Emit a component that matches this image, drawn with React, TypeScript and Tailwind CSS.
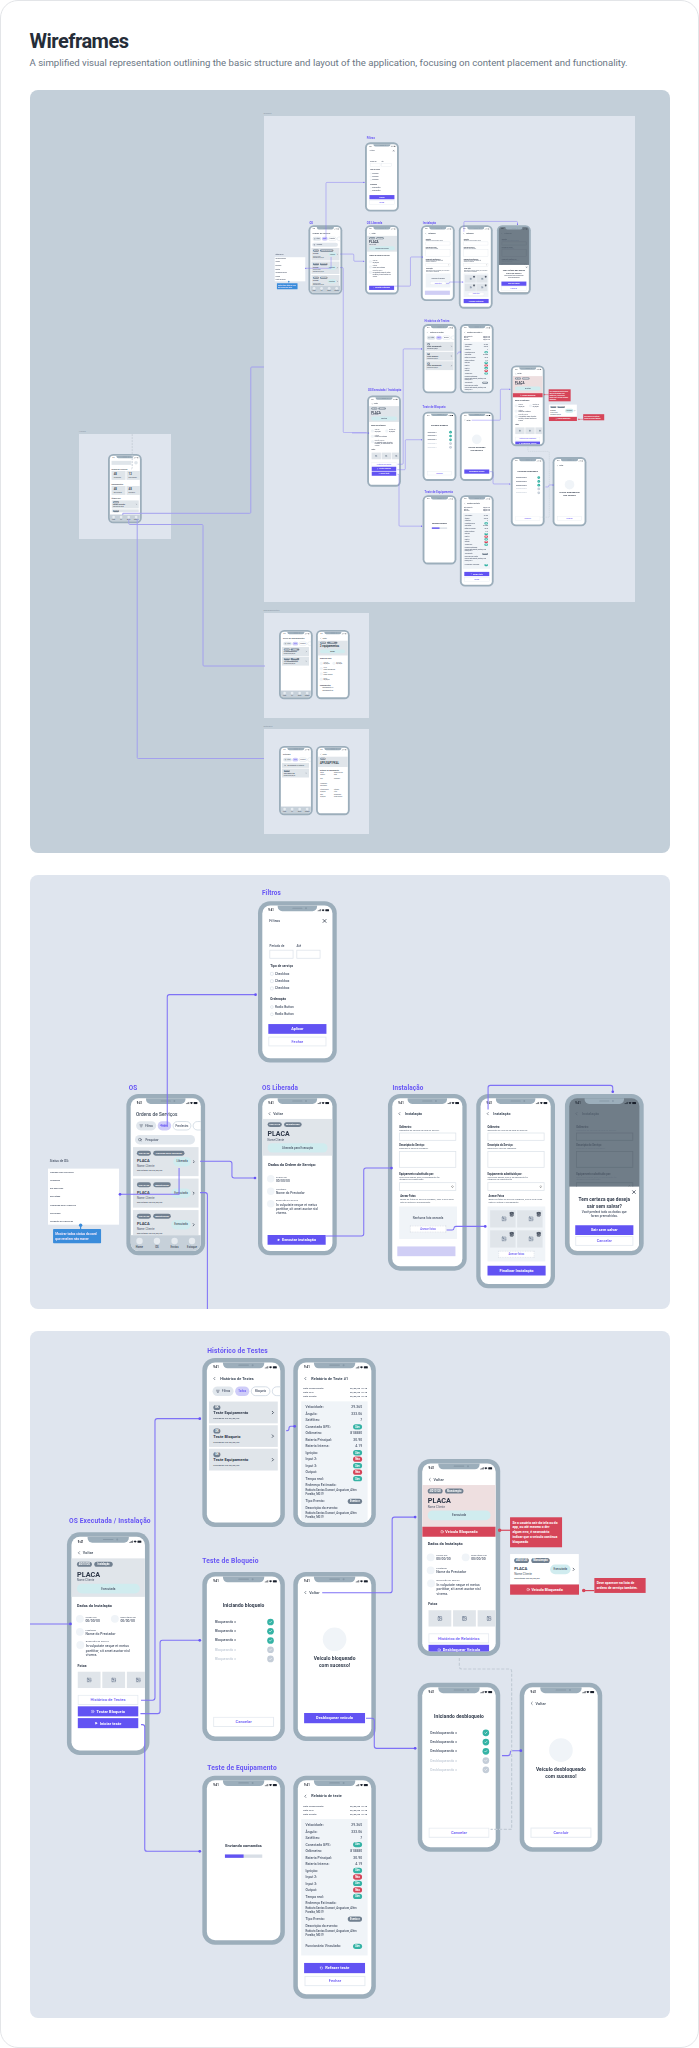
import React from 'react';
import {
  AlertCircle, Check, ChevronLeft, ChevronRight, ChevronsUpDown, Image as ImageIcon,
  ListFilter, Play, RotateCcw, Search, Trash2, X,
} from 'lucide-react';
import clsx from 'clsx';

type ChildrenProps = { className?: string; children?: React.ReactNode };

/* ---------- phone ---------- */

const StatusBar: React.FC = () => (
  <div className="flex h-[44px] shrink-0 items-center justify-between pl-[32px] pr-[16px] pt-[6px] text-[#1a202c]">
    <span className="text-[14px] font-bold leading-none">9:41</span>
    <svg className="h-[14px] w-[64px]" viewBox="0 0 64 14" fill="currentColor">
      <rect x="0" y="9" width="3" height="4" />
      <rect x="5" y="7" width="3" height="6" />
      <rect x="10" y="4" width="3" height="9" />
      <rect x="15" y="1" width="3" height="12" />
      <path d="M22 5 Q30 -2 38 5 L30 13 Z" />
      <rect x="42" y="1" width="20" height="12" rx="3" />
    </svg>
  </div>
);

const Phone: React.FC<ChildrenProps & { dark?: boolean }> = ({ className, children, dark }) => (
  <div className={clsx('absolute flex w-[420px] rounded-[64px] bg-[#9caebb] p-[23px] tracking-[0.3px]', className)}>
    <div className={clsx('relative flex w-full flex-col overflow-hidden rounded-[42px]', dark ? 'bg-[#707d88]' : 'bg-white')}>
      <div className="absolute left-[82px] top-[-2px] flex h-[32px] w-[210px] items-center justify-center gap-[14px] rounded-b-[24px] bg-[#9caebb]">
        <div className="ml-[24px] h-[6px] w-[54px] rounded-full bg-[#8799a8]" />
        <div className="h-[10px] w-[10px] rounded-full bg-[#8799a8]" />
      </div>
      <StatusBar />
      {children}
    </div>
  </div>
);

const Label: React.FC<ChildrenProps> = ({ className, children }) => (
  <div className={clsx('absolute whitespace-nowrap text-[34px] font-bold leading-[40px] tracking-[0.7px] text-[#6654f5]', className)}>
    {children}
  </div>
);

/* ---------- small parts ---------- */

const Button: React.FC<ChildrenProps> = ({ className, children }) => (
  <div className={clsx('flex h-[52px] w-[310px] shrink-0 items-center justify-center gap-[10px] bg-[#6253f3] text-[20px] font-bold text-white', className)}>
    {children}
  </div>
);

const OutlineButton: React.FC<ChildrenProps> = ({ className, children }) => (
  <div className={clsx('flex h-[52px] w-[310px] shrink-0 items-center justify-center border-[5px] border-[#e6ebf1] bg-white text-[20px] font-medium text-[#6654f5]', className)}>
    {children}
  </div>
);

const Badge: React.FC<ChildrenProps> = ({ className, children }) => (
  <div className={clsx('flex h-[26px] items-center justify-center whitespace-nowrap rounded-full bg-[#718090] text-[13px] font-bold tracking-normal text-white', className)}>
    {children}
  </div>
);

const Back: React.FC<{ text?: string; title?: string }> = ({ text, title }) => (
  <div className="flex h-[66px] shrink-0 items-center pl-[26px] pt-[10px] text-[#3c4858]">
    <ChevronLeft size={24} strokeWidth={3} />
    {text && <span className="ml-[8px] text-[19px] font-medium">{text}</span>}
    {title && <span className="ml-[18px] text-[19px] font-bold">{title}</span>}
  </div>
);

const Chips: React.FC<{ last: string }> = ({ last }) => (
  <div className="ml-[29px] flex h-[49px] w-[400px] shrink-0 gap-[8px] text-[14px] font-medium text-[#4a5568]">
    <div className="flex w-[118px] items-center justify-center gap-[12px] rounded-full bg-[#e1e7ed]">
      <ListFilter size={20} strokeWidth={3} />
      Filtros
    </div>
    <div className="flex w-[80px] items-center justify-center rounded-full bg-[#cfcdf8] text-[#6654f5]">Todos</div>
    <div className="flex w-[108px] items-center justify-center rounded-full border-[4px] border-[#cbd5e0]">{last}</div>
    <div className="w-[108px] rounded-full border-[4px] border-[#cbd5e0]" />
  </div>
);

const TabBar: React.FC = () => (
  <div className="mt-auto flex h-[84px] shrink-0 bg-[#c6d0d9] pt-[14px]">
    {['Home', 'OS', 'Envios', 'Estoque'].map(tab => (
      <div key={tab} className="flex flex-1 flex-col items-center gap-[6px] text-[14px] font-medium leading-none text-[#3c4858]">
        <div className="h-[34px] w-[34px] rounded-full bg-[#e6ebf0]" />
        {tab}
      </div>
    ))}
  </div>
);

const OrderCard: React.FC<{ tag: string; wide?: boolean; status: string; white?: boolean }> = ({ tag, wide, status, white }) => (
  <div className={clsx('flex h-[155px] w-[350px] shrink-0 items-center pl-[21px] pr-[14px] text-[#4a5568]', white ? 'bg-white' : 'bg-[#e0e5ea]')}>
    <div className="flex flex-1 flex-col">
      <div className="flex gap-[12px]">
        <Badge className="w-[75px]">#ID10120</Badge>
        <Badge className={wide ? 'w-[167px]' : 'w-[94px]'}>{tag}</Badge>
      </div>
      <span className="mt-[14px] text-[21px] font-bold leading-[26px] text-[#2d3748]">PLACA</span>
      <span className="mt-[6px] text-[15px] leading-[22px]">Nome Cliente</span>
      <span className="text-[12px] font-medium leading-[22px]">Executada em 00/00/00</span>
    </div>
    <div className="-ml-[60px] flex h-[50px] w-[104px] items-center justify-center rounded-full bg-[#d0ecef] text-[15px] font-medium">{status}</div>
    <ChevronRight className="ml-[4px] text-[#2d3748]" size={24} strokeWidth={3.5} />
  </div>
);

const Info: React.FC<{ label: string; value: string; className?: string }> = ({ label, value, className }) => (
  <div className={clsx('flex h-[66px] items-center gap-[8px] text-[#4a5568]', className)}>
    <div className="h-[40px] w-[40px] shrink-0 rounded-full bg-[#f0f4f8]" />
    <div className="flex flex-col whitespace-nowrap">
      <span className="text-[12px] leading-[18px]">{label}</span>
      <span className="text-[17px] font-medium leading-[20px]">{value}</span>
    </div>
  </div>
);

const ServiceDescription: React.FC = () => (
  <div className="ml-[25px] mt-[6px] flex h-[96px] shrink-0 gap-[8px] text-[#4a5568]">
    <div className="mt-[8px] h-[40px] w-[40px] shrink-0 rounded-full bg-[#f0f4f8]" />
    <div className="w-[250px]">
      <p className="text-[12px] leading-[22px]">Descrição do serviço</p>
      <p className="whitespace-nowrap text-[17px] font-medium leading-[23px]">
        In vulputate neque et metus<br />porttitor, sit amet auctor nisl<br />viverra.
      </p>
    </div>
  </div>
);

const PlateHeader: React.FC<{ tag: string; status: string; blocked?: boolean }> = ({ tag, status, blocked }) => (
  <div className={clsx('flex shrink-0 flex-col pl-[28px] pt-[17px]', blocked ? 'h-[212px] bg-[#eedfe0]' : 'h-[196px] bg-[#e0e5ea]')}>
    <div className="flex gap-[12px]">
      <Badge className="w-[76px]">#ID10120</Badge>
      <Badge className="w-[94px]">{tag}</Badge>
    </div>
    <span className="mt-[18px] text-[37px] font-bold leading-[40px] tracking-normal text-[#2d3748]">PLACA</span>
    <span className="mt-[1px] text-[14px] leading-[16px] text-[#4a5568]">Nome Cliente</span>
    <div className="mt-[11px] flex h-[50px] w-[320px] shrink-0 items-center justify-center rounded-full bg-[#d0ecef] text-[15px] font-medium text-[#4a5568]">{status}</div>
  </div>
);

const Photo: React.FC<ChildrenProps> = ({ className }) => (
  <div className={clsx('flex shrink-0 items-center justify-center bg-[#e0e5ea] text-[#718096]', className)}>
    <ImageIcon size={26} strokeWidth={3} />
  </div>
);

/* ---------- screens ---------- */

const FiltersScreen: React.FC<ChildrenProps> = ({ className }) => (
  <Phone className={className}>
    <div className="flex h-[76px] shrink-0 items-center justify-between pl-[37px] pr-[26px] text-[20px] font-medium text-[#4a5568]">
      Filtros
      <X size={32} strokeWidth={3} className="text-[#2d3748]" />
    </div>
    <div className="ml-[38px] mt-[85px] flex gap-[16px] text-[16px] font-medium leading-[24px] text-[#4a5568]">
      {['Período de', 'Até'].map(label => (
        <div key={label} className="flex w-[128px] flex-col gap-[7px]">
          {label}
          <div className="h-[47px] border-[4px] border-[#dde3ea]" />
        </div>
      ))}
    </div>
    <div className="ml-[42px] flex flex-col text-[17px] font-medium text-[#4a5568]">
      <h4 className="mb-[12px] mt-[25px] text-[17px] font-bold leading-[24px] text-[#2d3748]">Tipo de serviço</h4>
      {[1, 2, 3].map(i => (
        <div key={i} className="flex h-[39px] items-center gap-[7px]">
          <div className="h-[18px] w-[18px] rounded-[4px] border-[3px] border-[#d5dde6]" />Checkbox
        </div>
      ))}
      <h4 className="mb-[12px] mt-[24px] text-[17px] font-bold leading-[24px] text-[#2d3748]">Ordenação</h4>
      {[1, 2].map(i => (
        <div key={i} className="flex h-[39px] items-center gap-[7px]">
          <div className="h-[18px] w-[18px] rounded-full border-[3px] border-[#d5dde6]" />Radio Button
        </div>
      ))}
    </div>
    <Button className="ml-[32px] mt-[33px]">Aplicar</Button>
    <OutlineButton className="ml-[32px] mt-[15px]">Fechar</OutlineButton>
  </Phone>
);

const OrdersScreen: React.FC<ChildrenProps> = ({ className }) => (
  <Phone className={className}>
    <h3 className="mb-[22px] ml-[28px] mt-[26px] text-[25px] font-medium leading-[30px] text-[#3c4858]">Ordens de Serviços</h3>
    <Chips last="Pendentes" />
    <div className="ml-[23px] mt-[24px] flex h-[51px] w-[320px] shrink-0 items-center gap-[18px] rounded-full bg-[#e1e7ed] pl-[16px] text-[15px] font-medium text-[#4a5568]">
      <Search size={22} strokeWidth={3} />
      Pesquisar
    </div>
    <div className="ml-[12px] mt-[14px] flex h-[469px] flex-col gap-[13px] overflow-hidden">
      <OrderCard tag="Liberada para execução" wide status="Liberada" />
      <OrderCard tag="Manutenção" status="Executada" />
      <OrderCard tag="Manutenção" status="Executada" />
    </div>
    <TabBar />
  </Phone>
);

const ReleasedScreen: React.FC<ChildrenProps> = ({ className }) => (
  <Phone className={className}>
    <Back text="Voltar" />
    <PlateHeader tag="Manutenção" status="Liberada para Execução" />
    <h4 className="mb-[26px] ml-[32px] mt-[36px] text-[20px] font-bold leading-[28px] tracking-normal text-[#2d3748]">Dados da Ordem de Serviço:</h4>
    <Info className="ml-[25px]" label="Criado em" value="00/00/00" />
    <Info className="ml-[25px]" label="Prestador" value="Nome do Prestador" />
    <ServiceDescription />
    <Button className="ml-[28px] mt-[99px]"><Play size={16} fill="currentColor" />Executar instalação</Button>
  </Phone>
);

const Field: React.FC<ChildrenProps & { title: string; hint: React.ReactNode }> = ({ title, hint, className, children }) => (
  <div className={clsx('flex flex-col', className)}>
    <span className="text-[14px] font-bold leading-[16px] tracking-normal text-[#2d3748]">{title}</span>
    <span className="whitespace-nowrap text-[12px] leading-[15px] tracking-normal text-[#5a6778]">{hint}</span>
    {children}
  </div>
);

const InstallForm: React.FC<{ muted?: boolean }> = ({ muted }) => (
  <div className={clsx('ml-[37px] flex w-[304px] flex-col', muted && 'opacity-50')}>
    <Field title="Odômetro:" hint="Odômetro do veículo na hora do serviço." className="mt-[37px]">
      <div className="mt-[5px] h-[43px] border-[4px] border-[#dde3ea]" />
    </Field>
    <Field title="Descrição do Serviço:" hint="Descreva o serviço realizado." className="mt-[17px]">
      <div className="mt-[7px] h-[89px] border-[4px] border-[#dde3ea]" />
    </Field>
    <Field title="Equipamento substituído por:" hint={<>Selecione abaixo qual o equipamento foi<br />utilizado na substituição</>} className="mt-[26px]">
      <div className="mt-[6px] flex h-[46px] items-center justify-end border-[4px] border-[#dde3ea] pr-[8px]">
        <ChevronsUpDown size={16} strokeWidth={3} />
      </div>
    </Field>
    <Field
      title="Anexar Fotos"
      hint={<>Anexe as fotos do serviço realizado, com o local onde<br />está ou estava o equipamento</>}
      className="ml-[5px] mt-[20px]"
    />
  </div>
);

const InstallScreen: React.FC<ChildrenProps & { photos?: boolean }> = ({ className, photos }) => (
  <Phone className={className}>
    <Back title="Instalação" />
    <InstallForm />
    {photos ? (
      <div className="ml-[37px] mt-[17px] flex h-[293px] w-[308px] shrink-0 flex-col items-center bg-[#f0f4f8] pt-[20px]">
        <div className="grid grid-cols-2 gap-x-[8px] gap-y-[15px]">
          {[1, 2, 3, 4].map(i => (
            <div key={i} className="flex h-[92px] w-[136px] justify-end bg-[#e0e5ea] pr-[8px] pt-[8px] text-[#718096]">
              <ImageIcon size={28} strokeWidth={3} className="mr-[14px] mt-[24px]" />
              <Trash2 size={26} strokeWidth={4} className="text-[#2d3748]" />
            </div>
          ))}
        </div>
        <div className="mt-[18px] flex h-[36px] w-[192px] items-center justify-center border-[3px] border-dashed border-[#cfd6e0] bg-white text-[14px] font-medium text-[#6654f5]">Anexar fotos</div>
      </div>
    ) : (
      <div className="ml-[37px] mt-[17px] flex h-[173px] w-[308px] shrink-0 flex-col items-center bg-[#f0f4f8] pt-[50px] text-[15px] font-medium leading-[22px] text-[#4a5568]">
        Nenhuma foto anexada
        <div className="mt-[30px] flex h-[36px] w-[192px] items-center justify-center border-[3px] border-dashed border-[#cfd6e0] bg-white text-[14px] text-[#6654f5]">Anexar fotos</div>
      </div>
    )}
    {photos
      ? <Button className="ml-[37px] mt-[23px]">Finalizar Instalação</Button>
      : <div className="ml-[27px] mt-[40px] h-[52px] w-[310px] bg-[#d0cef5]" />}
  </Phone>
);

const ExitModalScreen: React.FC<ChildrenProps> = ({ className }) => (
  <Phone className={className} dark>
    <div className="flex h-[427px] flex-col overflow-hidden">
      <div className="opacity-50"><Back title="Instalação" /></div>
      <div className="[&_div]:border-[#56636f]"><InstallForm muted /></div>
    </div>
    <div className="flex flex-1 flex-col items-center bg-white text-center text-[#2d3748]">
      <X size={30} strokeWidth={3} className="mr-[14px] mt-[14px] self-end" />
      <p className="mt-[4px] text-[25px] font-bold leading-[37px]">Tem certeza que deseja<br />sair sem salvar?</p>
      <p className="mt-[2px] text-[16px] font-medium leading-[22px] text-[#4a5568]">Você perderá todo os dados que<br />foram preenchidos.</p>
      <Button className="mt-[38px]">Sair sem salvar</Button>
      <OutlineButton className="mt-[6px]">Cancelar</OutlineButton>
    </div>
  </Phone>
);

const ExecutedScreen: React.FC<ChildrenProps & { blocked?: boolean }> = ({ className, blocked }) => (
  <Phone className={className}>
    <Back text="Voltar" />
    <PlateHeader tag={blocked ? 'Manutenção' : 'Instalação'} status="Executada" blocked={blocked} />
    {blocked && (
      <div className="flex h-[51px] shrink-0 items-center justify-center gap-[8px] bg-[#d64559] text-[19px] font-bold text-white">
        <AlertCircle size={18} strokeWidth={3} />Veículo Bloqueado
      </div>
    )}
    <h4 className={clsx('mb-[20px] ml-[28px] text-[19px] font-bold leading-[28px] text-[#2d3748]', blocked ? 'mt-[24px]' : 'mt-[31px]')}>Dados da Instalação</h4>
    <div className="flex shrink-0">
      <Info className="ml-[23px] w-[178px]" label="Criado em" value="00/00/00" />
      <Info label="Executado em" value="00/00/00" />
    </div>
    <Info className="ml-[23px] shrink-0" label="Prestador" value="Nome do Prestador" />
    <ServiceDescription />
    <h4 className="ml-[31px] mt-[24px] text-[18px] font-bold leading-[24px] text-[#2d3748]">Fotos</h4>
    <div className="ml-[32px] mt-[20px] flex w-[400px] shrink-0 gap-[9px]">
      <Photo className="h-[83px] w-[116px]" />
      <Photo className="h-[83px] w-[116px]" />
      <Photo className="h-[83px] w-[116px]" />
    </div>
    <OutlineButton className="ml-[31px] mt-[34px]">{blocked ? 'Histórico de Relatórios' : 'Histórico de Testes'}</OutlineButton>
    <Button className="ml-[31px] mt-[7px]"><AlertCircle size={18} strokeWidth={3} />{blocked ? 'Desbloquear Veículo' : 'Testar Bloqueio'}</Button>
    {!blocked && <Button className="ml-[31px] mt-[8px]"><Play size={16} fill="currentColor" />Iniciar teste</Button>}
  </Phone>
);

const HistoryScreen: React.FC<ChildrenProps> = ({ className }) => (
  <Phone className={className}>
    <Back title="Histórico de Testes" />
    <div className="h-[12px] shrink-0" />
    <Chips last="Bloqueio" />
    <div className="ml-[11px] mt-[28px] flex w-[350px] flex-col gap-[9px]">
      {['Teste Equipamento', 'Teste Bloqueio', 'Teste Equipamento'].map((title, i) => (
        <div key={i} className="flex h-[111px] items-center justify-between bg-[#e0e5ea] pl-[22px] pr-[12px] text-[#2d3748]">
          <div className="flex flex-col">
            <Badge className="w-[36px]">OK</Badge>
            <span className="mt-[2px] text-[20px] font-bold leading-[26px]">{title}</span>
            <span className="mt-[4px] text-[12px] font-medium leading-[20px] text-[#4a5568]">Realizado em 00/00/00</span>
          </div>
          <ChevronRight size={26} strokeWidth={3.5} />
        </div>
      ))}
    </div>
  </Phone>
);

const readings: { name: string; value: string; kind?: 'on' | 'off' }[] = [
  { name: 'Velocidade:', value: '29.365' },
  { name: 'Ângulo:', value: '333.06' },
  { name: 'Satélites:', value: '7' },
  { name: 'Conectado GPS:', value: 'Sim', kind: 'on' },
  { name: 'Odômetro:', value: '818880' },
  { name: 'Bateria Principal:', value: '30.90' },
  { name: 'Bateria Interna:', value: '4.19' },
  { name: 'Ignição:', value: 'Sim', kind: 'on' },
  { name: 'Input 2:', value: 'Não', kind: 'off' },
  { name: 'Input 3:', value: 'Sim', kind: 'on' },
  { name: 'Output:', value: 'Não', kind: 'off' },
  { name: 'Tempo real:', value: 'Sim', kind: 'on' },
];

const Pill: React.FC<{ kind: 'on' | 'off'; children: React.ReactNode }> = ({ kind, children }) => (
  <span className={clsx('flex h-[27px] w-[46px] items-center justify-center rounded-full text-[13px] font-bold text-white', kind === 'on' ? 'bg-[#35b3a5]' : 'bg-[#d64559]')}>
    {children}
  </span>
);

const ReportScreen: React.FC<ChildrenProps & { title: string; full?: boolean }> = ({ className, title, full }) => (
  <Phone className={className}>
    <Back title={title} />
    <div className="ml-[27px] mt-[12px] flex w-[326px] shrink-0 flex-col text-[12px] font-medium leading-[20px] text-[#4a5568]">
      {['Data Recebimento:', 'Data GPS:', 'Data evento:'].map(label => (
        <div key={label} className="flex justify-between"><span>{label}</span><span>00/00/00 10:48</span></div>
      ))}
    </div>
    <div className={clsx('ml-[17px] mt-[16px] flex w-[338px] shrink-0 flex-col bg-[#f0f4f8] pl-[22px] pr-[28px] pt-[14px] text-[17px] font-medium text-[#4a5568]', full ? 'h-[694px]' : 'h-[640px]')}>
      {readings.map(({ name, value, kind }) => (
        <div key={name} className="flex h-[33px] shrink-0 items-center justify-between">
          {name}
          {kind ? <Pill kind={kind}>{value}</Pill> : <span>{value}</span>}
        </div>
      ))}
      <span className="leading-[32px]">Endereço Estimado:</span>
      <span className="whitespace-nowrap text-[14px] leading-[21px] tracking-normal">Rodovia Santos Dumont, Angustura, Além<br />Paraíba, MG19</span>
      <div className="mt-[9px] flex h-[32px] items-center justify-between">
        Tipo Evento:
        <Badge className="w-[73px]">Evento n</Badge>
      </div>
      <span className="leading-[32px]">Descrição do evento:</span>
      <span className="whitespace-nowrap text-[14px] leading-[21px] tracking-normal">Rodovia Santos Dumont, Angustura, Além<br />Paraíba, MG19</span>
      {full && (
        <div className="mt-[32px] flex h-[32px] items-center justify-between">
          Funcionário Vinculado:
          <Pill kind="on">Sim</Pill>
        </div>
      )}
    </div>
    {full && (
      <>
        <Button className="ml-[32px] mt-[38px]"><RotateCcw size={18} strokeWidth={3} />Refazer teste</Button>
        <OutlineButton className="ml-[34px] mt-[14px]">Fechar</OutlineButton>
      </>
    )}
  </Phone>
);

const ProgressScreen: React.FC<ChildrenProps & { title: string; step: string }> = ({ className, title, step }) => (
  <Phone className={className}>
    <h3 className="mt-[89px] text-center text-[25px] font-bold leading-[30px] text-[#2d3748]">{title}</h3>
    <div className="ml-[41px] mt-[52px] flex w-[300px] flex-col gap-[13px]">
      {[true, true, true, false, false].map((done, i) => (
        <div key={i} className={clsx('flex h-[34px] items-center justify-between text-[17px] font-medium', done ? 'text-[#4a5568]' : 'text-[#c4cdd8]')}>
          {step}
          <div className={clsx('flex h-[34px] w-[34px] items-center justify-center rounded-full text-white', done ? 'bg-[#35b3a5]' : 'bg-[#c4cdd8]')}>
            <Check size={18} strokeWidth={4} />
          </div>
        </div>
      ))}
    </div>
    <OutlineButton className="mb-[48px] ml-[32px] mt-auto">Cancelar</OutlineButton>
  </Phone>
);

const SuccessScreen: React.FC<ChildrenProps & { text: string }> = ({ className, text, children }) => (
  <Phone className={className}>
    <Back text="Voltar" />
    <div className="mt-[150px] h-[120px] w-[120px] shrink-0 self-center rounded-full bg-[#f0f4f8]" />
    <p className="mt-[18px] text-center text-[25px] font-bold leading-[37px] text-[#2d3748]">{text}<br />com sucesso!</p>
    {children}
  </Phone>
);

const SendingScreen: React.FC<ChildrenProps> = ({ className }) => (
  <Phone className={className}>
    <div className="mt-[276px] flex flex-col items-center gap-[30px] text-[20px] font-bold leading-[28px] text-[#2d3748]">
      Enviando comandos
      <div className="flex h-[17px] w-[190px] bg-[#d8dee6]"><div className="w-1/2 bg-[#6253f3]" /></div>
    </div>
  </Phone>
);

const summaries = [
  { title: 'Ordens de Serviços', tiles: [['48', 'Pendentes'], ['12', 'Executadas']] },
  { title: 'Equipamentos', tiles: [['48', 'Em estoque'], ['48', 'Enviados']] },
];

const HomeScreen: React.FC<ChildrenProps> = ({ className }) => (
  <Phone className={className}>
    <div className="ml-[21px] mt-[18px] flex shrink-0 items-center gap-[36px]">
      <div className="h-[50px] w-[246px] bg-[#dfe5ea]" />
      <div className="h-[44px] w-[44px] rounded-full bg-[#dfe5ea]" />
    </div>
    {summaries.map(({ title, tiles }) => (
      <div key={title} className="ml-[21px] mt-[36px] flex w-[380px] shrink-0 flex-col">
        <h4 className="text-[22px] font-bold leading-[36px] text-[#3c4858]">{title}</h4>
        <div className="mt-[4px] flex gap-[12px]">
          {tiles.map(([count, label]) => (
            <div key={label} className="flex h-[111px] w-[174px] flex-col justify-center bg-[#dfe5ea] pl-[26px] text-[#3c4858]">
              <span className="text-[34px] font-bold leading-[40px]">{count}</span>
              <span className="text-[19px] leading-[28px]">{label}</span>
            </div>
          ))}
        </div>
      </div>
    ))}
    <h4 className="ml-[21px] mt-[30px] text-[20px] font-bold leading-[28px] text-[#3c4858]">Últimas OSs</h4>
    <div className="ml-[21px] mt-[8px] flex h-[152px] w-[340px] shrink-0 flex-col gap-[12px] overflow-hidden text-[#2d3748]">
      <div className="flex h-[102px] shrink-0 items-center justify-between bg-[#dfe5ea] px-[18px]">
        <div>
          <Badge className="w-[76px]">#ID10120</Badge>
          <p className="text-[24px] font-bold leading-[30px]">Nome Cliente</p>
          <p className="text-[14px] leading-[20px]">Executada em 00/00</p>
        </div>
        <ChevronRight size={24} strokeWidth={3} />
      </div>
      <div className="h-[38px] shrink-0 bg-[#dfe5ea] px-[18px] pt-[8px]">
        <Badge className="w-[76px]">#ID10120</Badge>
      </div>
    </div>
    <TabBar />
  </Phone>
);

const StockListScreen: React.FC<ChildrenProps & { title: string; items: string[]; search?: boolean }> = ({ className, title, items, search }) => (
  <Phone className={className}>
    <h3 className="mb-[22px] ml-[28px] mt-[26px] text-[25px] font-medium leading-[30px] text-[#3c4858]">{title}</h3>
    <Chips last="Pendentes" />
    <div className="ml-[14px] mt-[18px] flex w-[336px] flex-col gap-[9px] text-[#2d3748]">
      {search && (
        <div className="flex h-[60px] items-center gap-[20px] whitespace-nowrap bg-[#dfe5ea] px-[26px] text-[18px]">
          <Search size={22} />Equipamento ou estoque
        </div>
      )}
      {items.map(item => (
        <div key={item} className="flex h-[111px] items-center justify-between bg-[#dfe5ea] px-[22px]">
          <div>
            <div className="flex gap-[8px]"><Badge className="w-[76px]">#ID10120</Badge>{!search && <Badge className="w-[110px]">Entregue</Badge>}</div>
            <p className="text-[22px] font-bold leading-[30px]">{item}</p>
            <p className="text-[14px]">Enviado em 00/00/00</p>
          </div>
          <ChevronRight size={24} strokeWidth={3} />
        </div>
      ))}
    </div>
    <TabBar />
  </Phone>
);

const ShipmentScreen: React.FC<ChildrenProps> = ({ className }) => (
  <Phone className={className}>
    <Back text="Voltar" />
    <div className="flex h-[184px] shrink-0 flex-col bg-[#e0e5ea] pl-[28px] pt-[12px]">
      <div className="flex gap-[10px]"><Badge className="w-[76px]">#ID10120</Badge><Badge className="w-[130px]">Enviado</Badge></div>
      <span className="mt-[14px] whitespace-nowrap text-[32px] font-bold leading-[40px] text-[#2d3748]">2 equipamentos</span>
      <div className="mt-[18px] flex h-[46px] w-[310px] items-center justify-center rounded-full bg-[#d0ecef] text-[15px]">Enviado</div>
    </div>
    <h4 className="mb-[10px] ml-[28px] mt-[24px] text-[20px] font-bold text-[#2d3748]">Dados do Envio</h4>
    <div className="flex shrink-0">
      <Info className="ml-[23px] w-[158px]" label="Criado em" value="00/00/00" />
      <Info label="Enviado em" value="00/00/00" />
    </div>
    <Info className="ml-[23px] shrink-0" label="Origem" value="Nome da Empresa" />
    <Info className="ml-[23px] shrink-0" label="Destino" value="Nome Técnico" />
    <Info className="ml-[23px] shrink-0" label="Entrega" value="00/00/00" />
    <h4 className="mb-[6px] ml-[28px] mt-[24px] text-[20px] font-bold text-[#2d3748]">Equipamentos</h4>
    {['Equipamento A1', 'Equipamento B1'].map(item => (
      <span key={item} className="ml-[58px] text-[18px] font-medium leading-[32px] text-[#4a5568]">{item}</span>
    ))}
  </Phone>
);

const details = [
  ['Marca', 'Suntech'], ['Modelo do chip', 'M2M'], ['IMEI', '-'], ['Operadora', '-'], ['Localização', 'Em estoque'], ['', ''],
  ['Última posição', '00/00/00'], ['Situação', 'Ativo'], ['Data', '00/00/00'], ['Responsável', 'Nome Técnico'],
];

const StockDetailScreen: React.FC<ChildrenProps> = ({ className }) => (
  <Phone className={className}>
    <Back text="Voltar" />
    <div className="flex h-[128px] shrink-0 flex-col bg-[#e0e5ea] pl-[28px] pt-[12px]">
      <Badge className="w-[70px]">#ID10120</Badge>
      <span className="mt-[16px] whitespace-nowrap text-[32px] font-bold leading-[40px] text-[#2d3748]">APFJ0AP1FKAL</span>
    </div>
    <h4 className="mb-[6px] ml-[26px] mt-[30px] text-[20px] font-bold text-[#2d3748]">Detalhes do Equipamento</h4>
    <div className="ml-[30px] grid grid-cols-2 gap-y-[28px] whitespace-nowrap text-[15px] font-medium leading-[20px] text-[#4a5568]">
      {details.map(([name, value], i) => (
        <div key={i} className="flex flex-col"><span>{name}</span><span>{value}</span></div>
      ))}
    </div>
  </Phone>
);

/* ---------- flows, in phone pixels ---------- */

const Wire: React.FC<{ d: string; end?: [number, number] }> = ({ d, end }) => (
  <>
    <path d={d} fill="none" stroke="#7f72f6" strokeWidth="5.5" strokeLinejoin="round" />
    {end && <circle cx={end[0]} cy={end[1]} r="7" fill="#6654f5" />}
  </>
);

const statuses = ['Liberada para Execução', 'Agendado', 'Em Execução', 'Executada', 'Finalizada pelo Financeiro', 'Cancelada', 'Pendente De Liberação'];

const OrdersFlow: React.FC<ChildrenProps> = ({ className }) => (
  <div className={clsx('absolute h-[2320px] w-[3413px] origin-top-left', className)}>
    <Label className="left-[1237px] top-[72px]">Filtros</Label>
    <Label className="left-[526px] top-[1116px]">OS</Label>
    <Label className="left-[1237px] top-[1116px]">OS Liberada</Label>
    <Label className="left-[1933px] top-[1116px]">Instalação</Label>
    <FiltersScreen className="left-[1216px] top-[140px] h-[860px]" />
    <OrdersScreen className="left-[514px] top-[1168px] h-[860px]" />
    <ReleasedScreen className="left-[1216px] top-[1168px] h-[860px]" />
    <InstallScreen className="left-[1909px] top-[1168px] h-[942px]" />
    <InstallScreen className="left-[2380px] top-[1168px] h-[1036px]" photos />
    <ExitModalScreen className="left-[2853px] top-[1168px] h-[860px]" />
    <div className="absolute left-[96px] top-[1514px] flex w-[379px] flex-col text-[#4a5568]">
      <span className="ml-[9px] text-[17px] font-medium leading-[26px]">Status de OS:</span>
      <div className="mt-[26px] flex h-[299px] flex-col justify-between bg-white px-[10px] py-[8px] text-[12px] font-medium leading-[18px]">
        {statuses.map(status => <span key={status}>{status}</span>)}
      </div>
      <div className="ml-[27px] mt-[23px] flex h-[76px] w-[256px] items-center whitespace-nowrap rounded-[4px] bg-[#3a8cdb] pl-[12px] text-[17px] font-bold leading-[24px] text-[#f3e9fb]">
        Mostrar todos status do card<br />que revelem não mover
      </div>
    </div>
    <svg className="pointer-events-none absolute inset-0 h-full w-full overflow-visible" viewBox="0 0 3413 2320">
      <Wire d="M693 1335 H732 V650 Q732 638 744 638 H1205" end={[1203, 638]} />
      <Wire d="M907 1527 H1065 Q1077 1527 1077 1539 V1604 Q1077 1616 1089 1616 H1202" end={[1200, 1616]} />
      <Wire d="M795 1563 V1703 H480" end={[480, 1703]} />
      <Wire d="M907 1694 H934 Q946 1694 946 1706 V3730 Q946 3742 958 3742 H1237" />
      <Wire d="M1579 1925 H1768 Q1780 1925 1780 1913 V1575 Q1780 1563 1792 1563 H1928" end={[1928, 1563]} />
      <Wire d="M2222 1893 H2251 Q2261 1893 2261 1884 T2271 1874 H2428" end={[2428, 1874]} />
      <Wire d="M2443 1250 V1134 Q2443 1122 2455 1122 H3096 Q3108 1122 3108 1134 V1158" end={[3108, 1156]} />
      <path d="M270 1888 V1862" stroke="#3a8cdb" strokeWidth="6" />
      <circle cx="270" cy="1868" r="9" fill="#3a8cdb" />
    </svg>
  </div>
);

const TestsFlow: React.FC<ChildrenProps> = ({ className }) => (
  <div className={clsx('absolute h-[3500px] w-[3257px] origin-top-left', className)}>
    <Label className="left-[198px] top-[943px]">OS Executada / Instalação</Label>
    <Label className="left-[902px] top-[78px]">Histórico de Testes</Label>
    <Label className="left-[877px] top-[1150px]">Teste de Bloqueio</Label>
    <Label className="left-[902px] top-[2200px]">Teste de Equipamento</Label>
    <ExecutedScreen className="left-[188px] top-[1024px] h-[1134px]" />
    <HistoryScreen className="left-[877px] top-[137px] h-[860px]" />
    <ReportScreen className="left-[1340px] top-[137px] h-[860px]" title="Relatório de Teste #1" />
    <ProgressScreen className="left-[877px] top-[1226px] h-[860px]" title="Iniciando bloqueio" step="Bloqueando x" />
    <SuccessScreen className="left-[1340px] top-[1226px] h-[860px]" text="Veículo bloqueado">
      <Button className="mb-[67px] ml-[32px] mt-auto">Desbloquear veículo</Button>
    </SuccessScreen>
    <SendingScreen className="left-[877px] top-[2263px] h-[860px]" />
    <ReportScreen className="left-[1340px] top-[2263px] h-[1135px]" title="Relatório de teste" full />
    <ExecutedScreen className="left-[1973px] top-[651px] h-[1003px]" blocked />
    <ProgressScreen className="left-[1973px] top-[1790px] h-[860px]" title="Iniciando desbloqueio" step="Desbloqueando x" />
    <SuccessScreen className="left-[2492px] top-[1790px] h-[860px]" text="Veículo desbloqueado">
      <OutlineButton className="mb-[48px] ml-[32px] mt-auto">Concluir</OutlineButton>
    </SuccessScreen>
    <div className="absolute left-[2443px] top-[948px] flex h-[149px] w-[263px] items-center bg-[#d64559] pl-[12px] text-[17px] font-bold leading-[24px] text-white">
      <p className="whitespace-nowrap">Se o usuário sair da tela ou do<br />app, ou até mesmo o der<br />algum erro, é necessário<br />indicar que o veículo continua<br />bloqueado</p>
    </div>
    <div className="absolute left-[2443px] top-[1135px] flex w-[351px] flex-col">
      <OrderCard tag="Manutenção" status="Executada" white />
      <div className="flex h-[52px] items-center justify-center gap-[8px] bg-[#d64559] text-[19px] font-bold text-white">
        <AlertCircle size={18} strokeWidth={3} />Veículo Bloqueado
      </div>
    </div>
    <div className="absolute left-[2872px] top-[1257px] flex h-[76px] w-[261px] items-center bg-[#d64559] pl-[12px] text-[17px] font-bold leading-[24px] text-white">
      <p className="whitespace-nowrap">Deve aparecer na lista de<br />ordens de serviço também.</p>
    </div>
    <svg className="pointer-events-none absolute inset-0 h-full w-full overflow-visible" viewBox="0 0 3257 3500">
      <Wire d="M0 1491 H206" end={[206, 1491]} />
      <Wire d="M565 1879 H624 Q636 1879 636 1867 V458 Q636 446 648 446 H866" end={[864, 446]} />
      <Wire d="M562 1947 H650 Q662 1947 662 1935 V1586 Q662 1574 674 1574 H866" end={[864, 1574]} />
      <Wire d="M565 2003 H572 Q584 2003 584 2015 V2636 Q584 2648 596 2648 H866" end={[864, 2648]} />
      <Wire d="M1304 507 H1309 Q1318 507 1318 496 T1327 485 H1349" end={[1347, 485]} />
      <Wire d="M1487 1332 H1831 Q1843 1332 1843 1320 V959 Q1843 947 1855 947 H1962" end={[1960, 947]} />
      <Wire d="M1710 1971 H1740 Q1752 1971 1752 1983 V2112 Q1752 2124 1764 2124 H1962" end={[1960, 2124]} />
      <Wire d="M2402 2161 H2432 Q2444 2161 2444 2148 T2456 2136 H2500" end={[2498, 2136]} />
      <path d="M2185 1664 V1708 Q2185 1720 2197 1720 H2439 Q2451 1720 2451 1732 V2536 H2344" fill="none" stroke="#c3ccd6" strokeWidth="6" strokeDasharray="16 8" />
      <g stroke="#d64559" strokeWidth="6" fill="#d64559">
        <path d="M2448 1014 H2390" />
        <circle cx="2390" cy="1014" r="6" />
        <path d="M2872 1321 H2818" />
        <circle cx="2818" cy="1321" r="6" />
      </g>
    </svg>
  </div>
);

/* ---------- boards ---------- */

const Board: React.FC<ChildrenProps> = ({ className, children }) => (
  <section className={clsx('relative shrink-0 overflow-hidden rounded-[8px]', className)}>{children}</section>
);

const Frame: React.FC<ChildrenProps & { name: string }> = ({ className, name }) => (
  <div className={clsx('absolute bg-[#dfe5ee]', className)}>
    <span className="absolute left-0 top-[-4px] text-[2.5px] leading-[3px] text-[#8a97a6]">{name}</span>
  </div>
);

const App: React.FC = () => {
  return (
    <main className="flex h-[2048px] w-[699px] flex-col overflow-hidden rounded-[18px] border border-[#e3e5e8] bg-white px-[28.5px] font-[Roboto,sans-serif]">
      <h1 className="mt-[27px] text-[20px] font-bold leading-[26px] tracking-[-0.5px] text-[#252d38]">Wireframes</h1>
      <p className="mt-[1px] whitespace-nowrap text-[9.6px] leading-[16px] text-[#6a7684]">
        A simplified visual representation outlining the basic structure and layout of the application, focusing on content placement and functionality.
      </p>

      <Board className="mt-[19px] h-[763px] bg-[#c3cfd9]">
        <Frame className="left-[49.5px] top-[344px] h-[105px] w-[92px]" name="Home" />
        <Frame className="left-[234px] top-[26px] h-[486px] w-[371.5px]" name="Ordens" />
        <Frame className="left-[234px] top-[523px] h-[105px] w-[105.5px]" name="Equipamentos" />
        <Frame className="left-[234px] top-[639px] h-[105px] w-[105.5px]" name="Estoque" />
        <div className="absolute left-[78.8px] top-[363.7px] origin-top-left scale-[0.0804]">
          <HomeScreen className="h-[860px]" />
        </div>
        <div className="absolute left-[249.8px] top-[539.7px] origin-top-left scale-[0.0804]">
          <StockListScreen className="left-0 h-[860px]" title="Envio de Equipamentos" items={['2 equipamentos', '12 equipamentos']} />
          <ShipmentScreen className="left-[460px] h-[860px]" />
        </div>
        <div className="absolute left-[249.8px] top-[655.7px] origin-top-left scale-[0.0804]">
          <StockListScreen className="left-0 h-[860px]" title="Estoque" items={['APFJ0AP1FK']} search />
          <StockDetailScreen className="left-[460px] h-[860px]" />
        </div>
        <OrdersFlow className="left-[237.8px] top-[40.7px] scale-[0.0806]" />
        <TestsFlow className="left-[322.4px] top-[223px] scale-[0.0805]" />
        <svg className="pointer-events-none absolute inset-0 h-full w-full" fill="none" stroke="#a3a0ee" strokeWidth="1">
          <path d="M92.8 425 V423.3 H219.8 Q220.8 423.3 220.8 422.3 V278 Q220.8 277 221.8 277 H234" />
          <path d="M98.8 429 V433.5 Q98.8 434.5 99.8 434.5 H172 Q173 434.5 173 435.5 V575 Q173 576 174 576 H235" />
          <path d="M107.2 429 V667.5 Q107.2 668.5 108.2 668.5 H234" />
          <path d="M101.5 379 Q102.2 379 102.2 377 V344" stroke="#c8d0d9" strokeDasharray="2 1" />
        </svg>
      </Board>

      <Board className="mt-[22px] h-[434px] bg-[#dfe5ee]">
        <OrdersFlow className="left-[0.5px] top-0 scale-[0.1875]" />
      </Board>

      <Board className="mt-[22px] h-[687px] bg-[#dfe5ee]">
        <TestsFlow className="left-[0.5px] top-0 scale-[0.1965]" />
      </Board>
    </main>
  );
};

export default App;
